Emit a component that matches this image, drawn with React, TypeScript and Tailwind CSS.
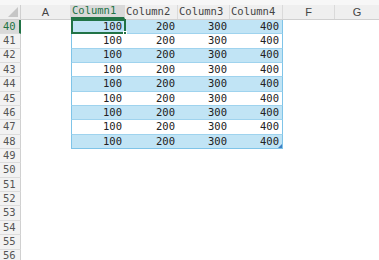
import React from "react";

const COLS = [
  { key: "A", w: "w-[50px]" },
  { key: "Column1", w: "w-[54px]" },
  { key: "Column2", w: "w-[53px]" },
  { key: "Column3", w: "w-[52px]" },
  { key: "Column4", w: "w-[53px]" },
  { key: "F", w: "w-[52px]" },
  { key: "G", w: "flex-1" },
];

const ROWS = Array.from({ length: 17 }, (_, i) => 40 + i);
const VALUES = ["100", "200", "300", "400"];

export default function App() {
  return (
    <div className="w-[379px] h-[260px] overflow-hidden bg-white font-['Liberation_Sans',sans-serif]">
      {/* strip above the headers */}
      <div className="h-[5px] bg-[#f7f7f7]" />

      {/* column headers */}
      <div className="flex h-[15px] bg-[#efefef] border-b border-[#d0d0d0]">
        <div className="w-[21px] relative border-r border-[#d0d0d0]">
          <div className="absolute right-[2px] bottom-[2px] w-0 h-0 border-l-[10px] border-l-transparent border-b-[10px] border-b-[#c6c6c6]" />
        </div>
        {COLS.map((c, i) => {
          const sel = c.key === "Column1";
          const mono = c.key.startsWith("Column");
          return (
            <div
              key={c.key}
              className={`${c.w} flex items-center ${mono ? "justify-start pl-[1px] font-['DejaVu_Sans_Mono',monospace] text-[10.5px]" : "justify-center text-[11px]"} ${i < COLS.length - 1 ? "border-r border-[#dadada]" : ""} ${sel ? "bg-[#d9d9d9] text-[#217346] border-b-2 border-b-[#217346]" : "text-[#444]"}`}
            >
              {c.key}
            </div>
          );
        })}
      </div>

      {/* body */}
      {ROWS.map((r, ri) => {
        const inTable = r <= 48;
        const band = inTable && ri % 2 === 0;
        const selRow = r === 40;
        return (
          <div key={r} className="flex h-[14.35px]">
            <div
              className={`w-[21px] flex items-center justify-start pl-[3px] font-['DejaVu_Sans_Mono',monospace] text-[10.5px] border-b border-[#dcdcdc] ${selRow ? "bg-[#d9d9d9] text-[#217346] border-r-2 border-r-[#217346]" : "bg-[#f2f2f2] text-[#555] border-r border-r-[#d0d0d0]"}`}
            >
              {r}
            </div>
            <div className="w-[50px]" />
            {inTable ? (
              <div
                className={`w-[212px] flex border-l border-r border-[#7fc4e8] ${r === 48 ? "border-b" : ""} relative ${band ? "bg-[#c1e4f5]" : "bg-white"} ${r < 48 ? "border-b border-b-[#9fd3ee]" : ""}`}
              >
                {VALUES.map((v, vi) => (
                  <div
                    key={vi}
                    className={`${vi === 0 ? "w-[53px]" : vi === 1 ? "w-[53px]" : vi === 2 ? "w-[52px]" : "flex-1"} flex items-center justify-end pr-[3px] font-['DejaVu_Sans_Mono',monospace] text-[10.5px] text-[#222] ${selRow && vi === 0 ? "outline-2 outline-[#217346] -outline-offset-1 relative" : ""}`}
                  >
                    {v}
                    {selRow && vi === 0 && (
                      <span className="absolute -right-[2px] -bottom-[2px] w-[4px] h-[4px] bg-[#217346] border border-white" />
                    )}
                  </div>
                ))}
                {r === 48 && (
                  <span className="absolute right-0 bottom-0 w-0 h-0 border-l-[4px] border-l-transparent border-b-[4px] border-b-[#3d7fc4]" />
                )}
              </div>
            ) : null}
          </div>
        );
      })}
    </div>
  );
}
